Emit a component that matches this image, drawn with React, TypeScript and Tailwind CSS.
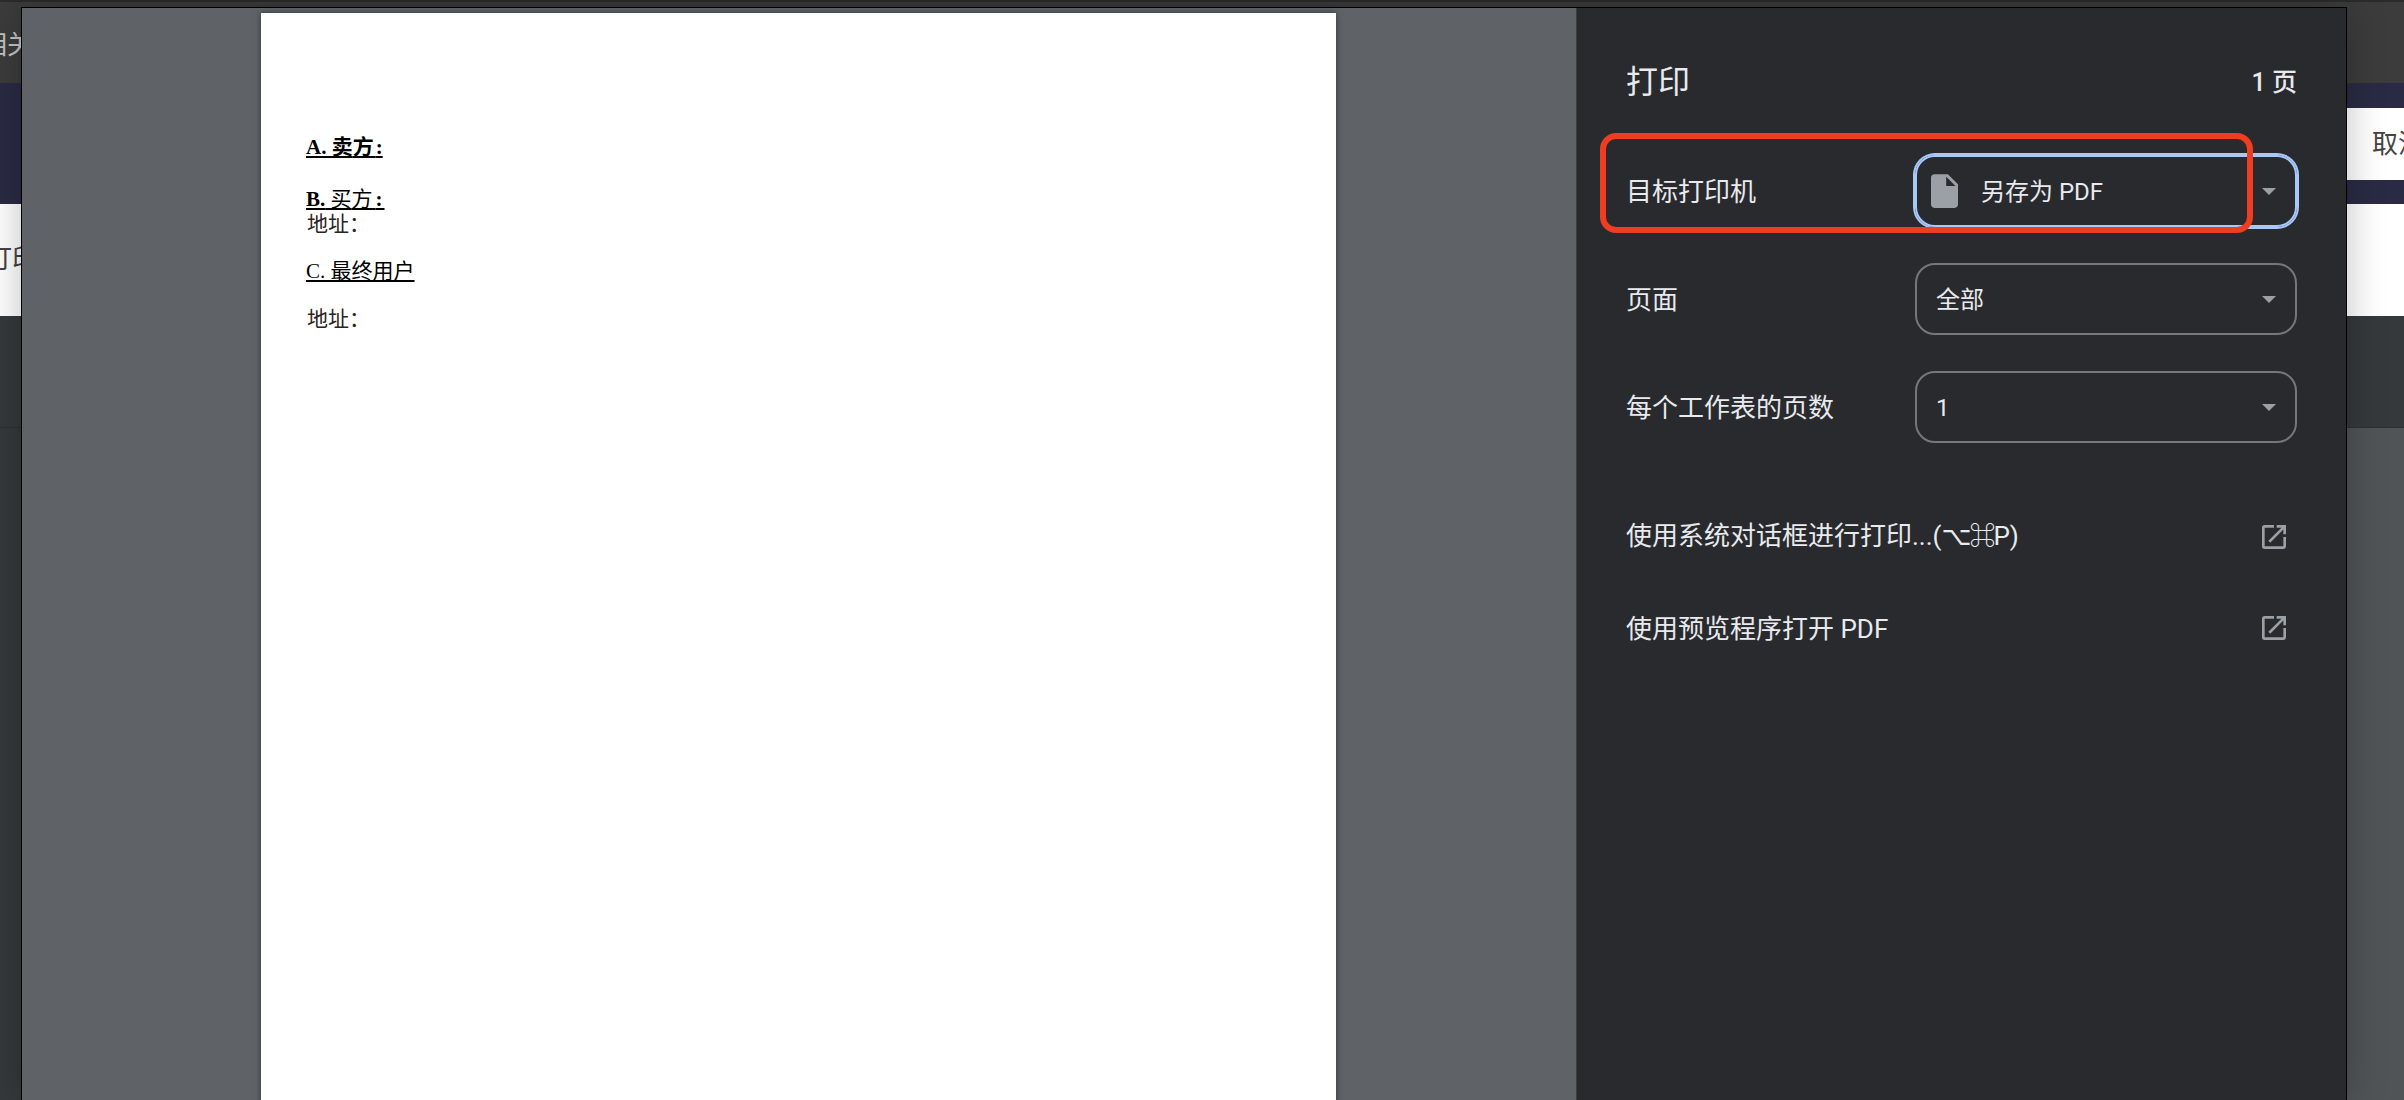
const sans = "font-['Roboto','Noto_Sans_CJK_SC','DejaVu_Sans',sans-serif]";

const FileIcon = () => (
  <svg viewBox="4 2 16 20" className="h-[34px] w-[27px] shrink-0 fill-[#9aa0a6]">
    <path d="M6 2c-1.1 0-2 .9-2 2v16c0 1.1.9 2 2 2h12c1.100 0 2-.9 2-2V8l-6-6H6zm7 7V3.500L18.500 9H13z" fillRule="evenodd" />
  </svg>
);

const OpenIcon = () => (
  <svg viewBox="3 3 18 18" className="h-[24px] w-[24px] fill-[#9aa0a6]">
    <path d="M19 19H5V5h7V3H5a2 2 0 00-2 2v14a2 2 0 002 2h14c1.100 0 2-.9 2-2v-7h-2v7zM14 3v2h3.590l-9.830 9.830 1.410 1.410L19 6.410V10h2V3h-7z" />
  </svg>
);

const Caret = () => (
  <svg viewBox="0 0 14 7" className="h-[7px] w-[14px] fill-[#9aa0a6]">
    <path d="M0 0h14L7 7z" />
  </svg>
);

const SelectRow = ({ label, value, icon, focused }: { label: string; value: string; icon?: boolean; focused?: boolean }) => (
  <div className="grid h-[72px] grid-cols-[289px_1fr] items-center">
    <div className="pt-[3px] text-[26px] text-[#e8eaed]">{label}</div>
    <div
      className={
        focused
          ? "flex h-[72px] items-center rounded-[20px] border-2 border-[#a8c7fa] pl-[14px] pr-[19px] shadow-[0_0_0_2px_#a8c7fa]"
          : "flex h-[72px] items-center rounded-[20px] border-2 border-[#75777a] pl-[19px] pr-[19px]"
      }
    >
      {icon && (
        <div className="mr-[23px]">
          <FileIcon />
        </div>
      )}
      <span className="flex-1 pt-[2px] text-[24px] text-[#e8eaed]">{value}</span>
      <Caret />
    </div>
  </div>
);

const LinkRow = ({ children }: { children: React.ReactNode }) => (
  <div className="flex h-[91px] items-center justify-between pr-[11px]">
    <span className="text-[26px] text-[#e8eaed]">{children}</span>
    <OpenIcon />
  </div>
);

export default function App() {
  return (
    <div className={`relative h-[1100px] w-[2404px] overflow-hidden bg-[#35393c] ${sans}`}>
      {/* page behind the dialog */}
      <div className="h-[2px] bg-[#2b2b2b]" />
      <div className="flex h-[81px] items-start overflow-hidden bg-[#3c3c3c] pt-[24px] text-[26px] text-[#c4c4c4]">
        <span className="-ml-[19px]">相关</span>
      </div>
      <div className="flex h-[121px] items-center justify-end bg-[#2a2a44]">
        <div className="h-[72px] w-[57px] overflow-hidden whitespace-nowrap bg-white pl-[25px] text-[26px] leading-[72px] text-[#444444]">
          取消
        </div>
      </div>
      <div className="h-[112px] overflow-hidden whitespace-nowrap bg-white pt-[37px] text-[26px] leading-[36px] text-[#444444]">
        <span className="-ml-[14px] inline-block">打印</span>
      </div>
      <div className="h-[112px] border-b border-b-[#2e3134] bg-[#35393c]" />
      <div className="ml-auto h-[672px] w-[57px] bg-[#505457]" />

      {/* print dialog */}
      <div className="absolute bottom-0 left-[21px] right-[57px] top-[7px] flex border border-b-0 border-black bg-[#5f6368] shadow-[0_0_36px_rgba(0,0,0,0.25)]">
        <div className="flex-1 pl-[239px] pt-[5px]">
          <div className="h-[1200px] w-[1075px] bg-white pl-[45px] pt-[122px] text-[21px] leading-[24px] text-black shadow-[0_0_6px_rgba(0,0,0,0.5)] font-['Liberation_Serif','Noto_Sans_CJK_SC',serif]">
            <div className="font-bold underline">
              A. 卖<span className="tracking-[2px]">方</span>:
            </div>
            <div className="mt-[28px] underline">
              <span className="font-bold">B.</span> 买<span className="tracking-[3px]">方</span><span className="font-bold tracking-[2px]">:</span>
            </div>
            <div className="h-[24px] pl-[1px] pt-[1px] text-[#2a2320]">地址：</div>
            <div className="mt-[24px] underline">C. 最终用户</div>
            <div className="mt-[24px] pl-[1px] text-[#2a2320]">地址：</div>
          </div>
        </div>

        <div className="w-[770px] shrink-0 border-l border-l-[#3c3d40] bg-[#292a2d] pl-[49px] pr-[49px]">
          <div className="flex h-[147px] items-center justify-between">
            <span className="text-[32px] text-[#e8eaed]">打印</span>
            <span className="pt-[2px] text-[25px] font-medium text-[#e8eaed]">1 页</span>
          </div>
          <div className="flex flex-col gap-[36px]">
            <SelectRow label="目标打印机" value="另存为 PDF" icon focused />
            <SelectRow label="页面" value="全部" />
            <SelectRow label="每个工作表的页数" value="1" />
          </div>
          <div className="mt-[48px]">
            <LinkRow>
              使用系统对话框进行打印...(<span className="tracking-[-2px]">⌥⌘</span>P)
            </LinkRow>
            <LinkRow>
              <span className="relative top-[2px]">使用预览程序打开 PDF</span>
            </LinkRow>
          </div>
        </div>
      </div>

      {/* red annotation drawn over the screenshot */}
      <div className="absolute left-[1600px] top-[133px] h-[100px] w-[653px] rounded-[16px] border-[6px] border-[#ee3d20]" />
    </div>
  );
}
